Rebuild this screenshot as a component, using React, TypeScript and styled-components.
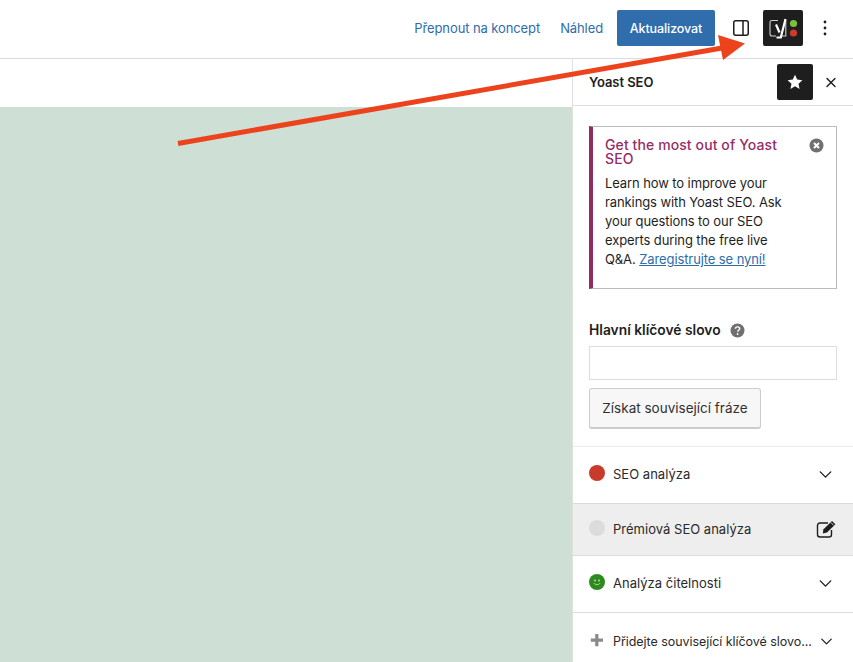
import React from "react";
import styled, { createGlobalStyle } from "styled-components";
import { X, ChevronDown } from "lucide-react";

const Global = createGlobalStyle`
  html, body { margin: 0; padding: 0; background: #fff; height: 100%; overflow: hidden; }
  * { box-sizing: border-box; }
  body { font-family: Inter, "Liberation Sans", sans-serif; font-size: 13px; color: #1e1e1e; }
`;

const Page = styled.div`
  position: relative;
  width: 853px;
  height: 662px;
  display: flex;
  flex-direction: column;
  overflow: hidden;
`;

const TopBar = styled.header`
  height: 59px;
  flex: none;
  border-bottom: 1px solid #dcdcde;
  display: flex;
  align-items: center;
  justify-content: flex-end;
  padding: 0 18px 2px 0;
`;

const TextLink = styled.a<{ $gap: number }>`
  color: #2e6dab;
  font-size: 13px;
  letter-spacing: -0.1px;
  margin-right: ${(p) => p.$gap}px;
`;

const Primary = styled.button`
  width: 98px;
  height: 36px;
  border: 0;
  border-radius: 2px;
  background: #2f6dad;
  color: #fff;
  font: 500 12.5px Inter, sans-serif;
  letter-spacing: -0.1px;
  padding: 0;
  margin-right: 16px;
`;

const IconSlot = styled.div<{ $gap: number }>`
  width: 20px;
  height: 20px;
  display: flex;
  align-items: center;
  justify-content: center;
  margin-right: ${(p) => p.$gap}px;
`;

const YoastTile = styled.div`
  width: 40px;
  height: 36px;
  border-radius: 2px;
  background: #1e1e1e;
  display: flex;
  align-items: center;
  justify-content: center;
  margin-right: 12px;
`;

const Body = styled.div`
  flex: 1;
  display: flex;
  min-height: 0;
`;

const Editor = styled.main`
  flex: 1;
  display: flex;
  flex-direction: column;
`;

const EditorHead = styled.div`
  height: 48px;
  flex: none;
  background: #fff;
`;

const Canvas = styled.div`
  flex: 1;
  background: #cedfd6;
`;

const Sidebar = styled.aside`
  width: 281px;
  flex: none;
  border-left: 1px solid #e0e0e0;
  background: #fff;
  display: flex;
  flex-direction: column;
`;

const SideHead = styled.div`
  height: 47px;
  flex: none;
  border-bottom: 1px solid #e0e0e0;
  display: flex;
  align-items: center;
  padding: 0 14px 0 16px;
`;

const SideTitle = styled.div`
  flex: 1;
  font-weight: 600;
  font-size: 13px;
  letter-spacing: -0.05px;
`;

const StarTile = styled.div`
  width: 36px;
  height: 36px;
  border-radius: 2px;
  background: #1e1e1e;
  display: flex;
  align-items: center;
  justify-content: center;
  margin-right: 10px;
`;

const CloseBtn = styled.div`
  width: 16px;
  height: 16px;
  display: flex;
  align-items: center;
  justify-content: center;
`;

const Notice = styled.div`
  position: relative;
  flex: none;
  margin: 20px 16px 0;
  height: 163px;
  border: 1px solid #bbb;
  border-left: 4px solid #8f2d62;
  padding: 11px 40px 0 12px;
`;

const NoticeTitle = styled.div`
  color: #962e66;
  font-weight: 500;
  font-size: 14px;
  line-height: 14px;
  letter-spacing: 0.1px;
  margin-bottom: 8px;
`;

const NoticeText = styled.div`
  font-size: 13px;
  line-height: 19px;
  letter-spacing: -0.1px;
  color: #1e1e1e;
  width: 186px;
  white-space: nowrap;
  a { color: #2e6dab; text-decoration: underline; }
`;

const Dismiss = styled.div`
  position: absolute;
  top: 11px;
  right: 12px;
  width: 15px;
  height: 15px;
`;

const FocusBlock = styled.div`
  flex: none;
  padding: 33px 16px 17px;
  border-bottom: 1px solid #ececec;
`;

const FieldLabel = styled.div`
  display: flex;
  align-items: center;
  gap: 9px;
  height: 16px;
  font-weight: 600;
  font-size: 13.8px;
  margin-bottom: 8px;
`;

const KeywordInput = styled.input`
  display: block;
  width: 100%;
  height: 34px;
  border: 1px solid #ddd;
  background: #fff;
  padding: 0 8px;
  margin-bottom: 8px;
`;

const Ghost = styled.button`
  display: block;
  width: 172px;
  height: 41px;
  border: 1px solid #ccc;
  border-bottom-width: 2px;
  border-radius: 3px;
  background: #f7f7f7;
  color: #303030;
  font: 400 13.5px Inter, sans-serif;
  padding: 0;
`;

const Row = styled.div<{ $h: number; $shade?: boolean }>`
  height: ${(p) => p.$h}px;
  flex: none;
  display: flex;
  align-items: center;
  padding: 0 16px 1px;
  background: ${(p) => (p.$shade ? "#eee" : "#fff")};
  border-bottom: 1px solid #ddd;
  &:last-child { border-bottom: 0; }
`;

const Bullet = styled.div<{ $c?: string }>`
  width: 16px;
  height: 16px;
  border-radius: 50%;
  flex: none;
  background: ${(p) => p.$c || "transparent"};
  margin: -3px 8px 0 0;
  display: flex;
  align-items: center;
  justify-content: center;
`;

const RowText = styled.div<{ $small?: boolean }>`
  flex: 1;
  white-space: nowrap;
  margin-top: -1px;
  font-size: ${(p) => (p.$small ? 12.5 : 13)}px;
  letter-spacing: ${(p) => (p.$small ? -0.05 : 0.02)}px;
  color: #2a2a2a;
`;

const Chevron = styled(ChevronDown)`
  flex: none;
  margin-right: 1px;
`;

const Arrow = styled.svg`
  position: absolute;
  left: 0;
  top: 0;
  pointer-events: none;
`;

export default function App() {
  return (
    <Page>
      <Global />
      <TopBar>
        <TextLink $gap={20}>Přepnout na koncept</TextLink>
        <TextLink $gap={14}>Náhled</TextLink>
        <Primary>Aktualizovat</Primary>
        <IconSlot $gap={12}>
          <svg width="18" height="18" viewBox="0 0 18 18" fill="none">
            <rect x="1.75" y="1.75" width="14.5" height="14.5" rx="2" stroke="#1e1e1e" strokeWidth="1.5" />
            <path d="M11 2v14" stroke="#1e1e1e" strokeWidth="1.5" />
          </svg>
        </IconSlot>
        <YoastTile>
          <svg width="34" height="26" viewBox="0 0 34 26" fill="none">
            <path d="M12 5.500H6a2 2 0 0 0-2 2v11.500a2 2 0 0 0 2 2h4" stroke="#d0d0d0" strokeWidth="1.100" />
            <path d="M19 5.500h.8V21H14" stroke="#d0d0d0" strokeWidth="1.100" />
            <path d="M19.500 4 14.800 22.500H10.500M10 9.500l3.500 8" stroke="#fff" strokeWidth="2.200" />
            <circle cx="27.500" cy="8.500" r="3.600" fill="#7cc038" />
            <circle cx="27.500" cy="18" r="3.600" fill="#d0392b" />
          </svg>
        </YoastTile>
        <IconSlot $gap={0}>
          <svg width="4" height="16" viewBox="0 0 4 16">
            <circle cx="2" cy="2" r="1.4" fill="#1e1e1e" />
            <circle cx="2" cy="8" r="1.4" fill="#1e1e1e" />
            <circle cx="2" cy="14" r="1.4" fill="#1e1e1e" />
          </svg>
        </IconSlot>
      </TopBar>
      <Body>
        <Editor>
          <EditorHead />
          <Canvas />
        </Editor>
        <Sidebar>
          <SideHead>
            <SideTitle>Yoast SEO</SideTitle>
            <StarTile>
              <svg width="16" height="16" viewBox="0 0 16 16">
                <path d="M8 .8l2.200 4.800 5.200.6-3.900 3.500 1.100 5.200L8 12.300l-4.600 2.600 1.100-5.200L.6 6.200l5.200-.6z" fill="#fff" />
              </svg>
            </StarTile>
            <CloseBtn><X size={17} strokeWidth={2} color="#1e1e1e" /></CloseBtn>
          </SideHead>
          <Notice>
            <NoticeTitle>Get the most out of Yoast SEO</NoticeTitle>
            <NoticeText>
              Learn how to improve your<br />
              rankings with Yoast SEO. Ask<br />
              your questions to our SEO<br />
              experts during the free live<br />
              Q&amp;A. <a>Zaregistrujte se nyní!</a>
            </NoticeText>
            <Dismiss>
              <svg width="15" height="15" viewBox="0 0 15 15">
                <circle cx="7.500" cy="7.500" r="7" fill="#707070" />
                <path d="M5 5l5 5M10 5l-5 5" stroke="#fff" strokeWidth="2" />
              </svg>
            </Dismiss>
          </Notice>
          <FocusBlock>
            <FieldLabel>
              Hlavní klíčové slovo
              <svg width="15" height="15" viewBox="0 0 15 15">
                <circle cx="7.500" cy="7.500" r="7" fill="#707070" />
                <path d="M5.400 5.800c0-1.200 1-1.900 2.200-1.900s2.100.7 2.100 1.800c0 1.600-2.100 1.500-2.100 3.100" stroke="#fff" strokeWidth="1.400" fill="none" />
                <circle cx="7.600" cy="11" r="0.900" fill="#fff" />
              </svg>
            </FieldLabel>
            <KeywordInput />
            <Ghost>Získat související fráze</Ghost>
          </FocusBlock>
          <Row $h={57}>
            <Bullet $c="#c93a2c" />
            <RowText>SEO analýza</RowText>
            <Chevron size={21} strokeWidth={1.6} color="#1e1e1e" />
          </Row>
          <Row $h={52} $shade>
            <Bullet $c="#dcdcdc" />
            <RowText>Prémiová SEO analýza</RowText>
            <svg width="21" height="18" viewBox="0 0 21 18" fill="none">
              <path d="M12 3H4a2.500 2.500 0 0 0-2.500 2.500v9A2.500 2.500 0 0 0 4 17h9a2.500 2.500 0 0 0 2.500-2.500V10" stroke="#1e1e1e" strokeWidth="1.400" />
              <path d="M7.500 9.200 16 .9l3.400 3.300-8.400 8.400-4.200 1z" fill="#1e1e1e" />
              <path d="M14.800 2.400l3 3" stroke="#eee" strokeWidth="0.900" />
            </svg>
          </Row>
          <Row $h={57}>
            <Bullet $c="#2e8a1f">
              <svg width="12" height="12" viewBox="0 0 12 12" fill="none">
                <circle cx="4" cy="4.500" r="0.900" fill="#bfe3b2" />
                <circle cx="8" cy="4.500" r="0.900" fill="#bfe3b2" />
                <path d="M3 7.200c1.400 2 4.600 2 6 0" stroke="#bfe3b2" strokeWidth="0.900" />
              </svg>
            </Bullet>
            <RowText>Analýza čitelnosti</RowText>
            <Chevron size={21} strokeWidth={1.6} color="#1e1e1e" />
          </Row>
          <Row $h={58}>
            <Bullet>
              <svg width="14" height="14" viewBox="0 0 14 14">
                <path d="M5.200 1h3.200v4.500H13v3.200H8.400v4.500H5.200V8.700H.8V5.500h4.400z" fill="#8a8a8a" />
              </svg>
            </Bullet>
            <RowText $small>Přidejte související klíčové slovo...</RowText>
            <Chevron size={19} strokeWidth={1.6} color="#1e1e1e" />
          </Row>
        </Sidebar>
      </Body>
      <Arrow width="853" height="662" viewBox="0 0 853 662">
        <path d="M178 143.500 722 48" stroke="#ec431c" strokeWidth="5" fill="none" />
        <path d="M745 43.500 718 35l5 25z" fill="#ec431c" />
      </Arrow>
    </Page>
  );
}
